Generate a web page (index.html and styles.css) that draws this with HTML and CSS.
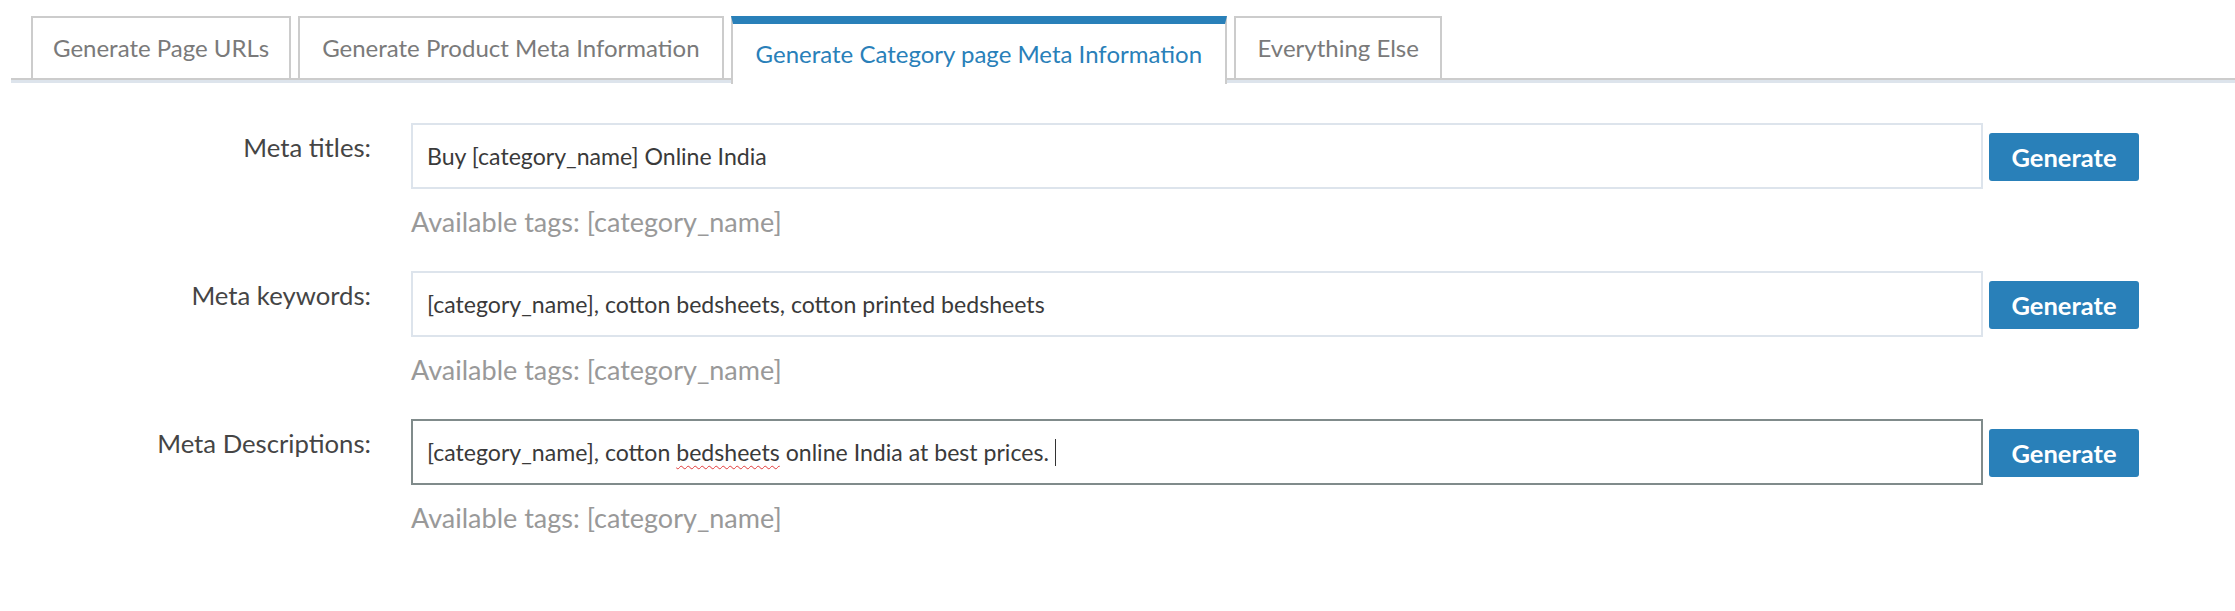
FILE: index.html
```html
<!DOCTYPE html>
<html>
<head>
<meta charset="utf-8">
<title>Meta Information</title>
<link rel="stylesheet" href="styles.css">
</head>
<body>
<div class="tabs">
  <ul class="tab-list">
    <li class="tab">Generate Page URLs</li>
    <li class="tab tab-wide">Generate Product Meta Information</li>
    <li class="tab tab-active">Generate Category page Meta Information</li>
    <li class="tab tab-last">Everything Else</li>
  </ul>
</div>

<div class="form">
  <div class="row">
    <div class="label">Meta titles:</div>
    <div class="control">
      <div class="input-line">
        <div class="field">Buy [category_name] Online India</div>
        <button class="btn">Generate</button>
      </div>
      <div class="help">Available tags: [category_name]</div>
    </div>
  </div>

  <div class="row">
    <div class="label">Meta keywords:</div>
    <div class="control">
      <div class="input-line">
        <div class="field">[category_name], cotton bedsheets, cotton printed bedsheets</div>
        <button class="btn">Generate</button>
      </div>
      <div class="help">Available tags: [category_name]</div>
    </div>
  </div>

  <div class="row">
    <div class="label">Meta Descriptions:</div>
    <div class="control">
      <div class="input-line">
        <div class="field field-focus">[category_name], cotton <span class="misspelled">bedsheets</span>&nbsp;online India at best prices.<span class="caret"></span></div>
        <button class="btn">Generate</button>
      </div>
      <div class="help">Available tags: [category_name]</div>
    </div>
  </div>
</div>
</body>
</html>
```

FILE: styles.css
```css
* { box-sizing: border-box; }

body {
  margin: 0;
  background: #ffffff;
  font-family: Lato, "Noto Sans", sans-serif;
  color: #444;
}

/* ---------- tabs ---------- */
.tabs {
  margin-left: 11px;
  border-bottom: 3px solid #dde4ec;
}

.tab-list {
  list-style: none;
  margin: 0;
  padding: 16px 0 0 20px;
  height: 80px;
  display: flex;
  align-items: flex-start;
  gap: 7px;
  border-bottom: 2px solid #cccccc;
}

.tab {
  height: 62px;
  padding: 0 20px;
  border: 2px solid #cccccc;
  border-bottom: none;
  background: #ffffff;
  font-size: 24px;
  line-height: 60px;
  color: #7a7a7a;
  white-space: nowrap;
}

.tab-wide {
  padding: 0 22px;
}

.tab-last {
  padding: 0 21.5px;
}

.tab-active {
  height: 68px;
  padding: 0 23px;
  border-top: 8px solid #2980b9;
  color: #2980b9;
}

/* ---------- form ---------- */
.form {
  padding: 40px 96px 0 0;
  display: flex;
  flex-direction: column;
  gap: 29px;
}

.row {
  display: grid;
  grid-template-columns: 371px 1fr;
  column-gap: 40px;
}

.label {
  text-align: right;
  font-size: 25.7px;
  line-height: 40px;
  padding-top: 4px;
  color: #454545;
}

.control {
  display: flex;
  flex-direction: column;
}

.input-line {
  display: flex;
  align-items: center;
  gap: 6px;
}

.field {
  flex: 1;
  height: 66px;
  padding: 0 14px;
  border: 2px solid #dde4ec;
  display: flex;
  align-items: center;
  font-size: 23.1px;
  color: #3a3a3a;
  white-space: pre;
}

.field-focus {
  border-color: #808b8b;
}

.misspelled {
  text-decoration: underline wavy #e23a3a;
  text-decoration-thickness: 1px;
  text-underline-offset: 4px;
}

.caret {
  display: inline-block;
  width: 1px;
  height: 27px;
  margin-left: 6px;
  background: #333;
}

.btn {
  width: 150px;
  height: 48px;
  margin-top: 2px;
  border: none;
  border-radius: 3px;
  background: #2980b9;
  color: #ffffff;
  font-family: Lato, "Noto Sans", sans-serif;
  font-weight: bold;
  font-size: 25.5px;
  padding: 0;
}

.help {
  margin-top: 13px;
  font-size: 27px;
  line-height: 40px;
  color: #999999;
}
```
